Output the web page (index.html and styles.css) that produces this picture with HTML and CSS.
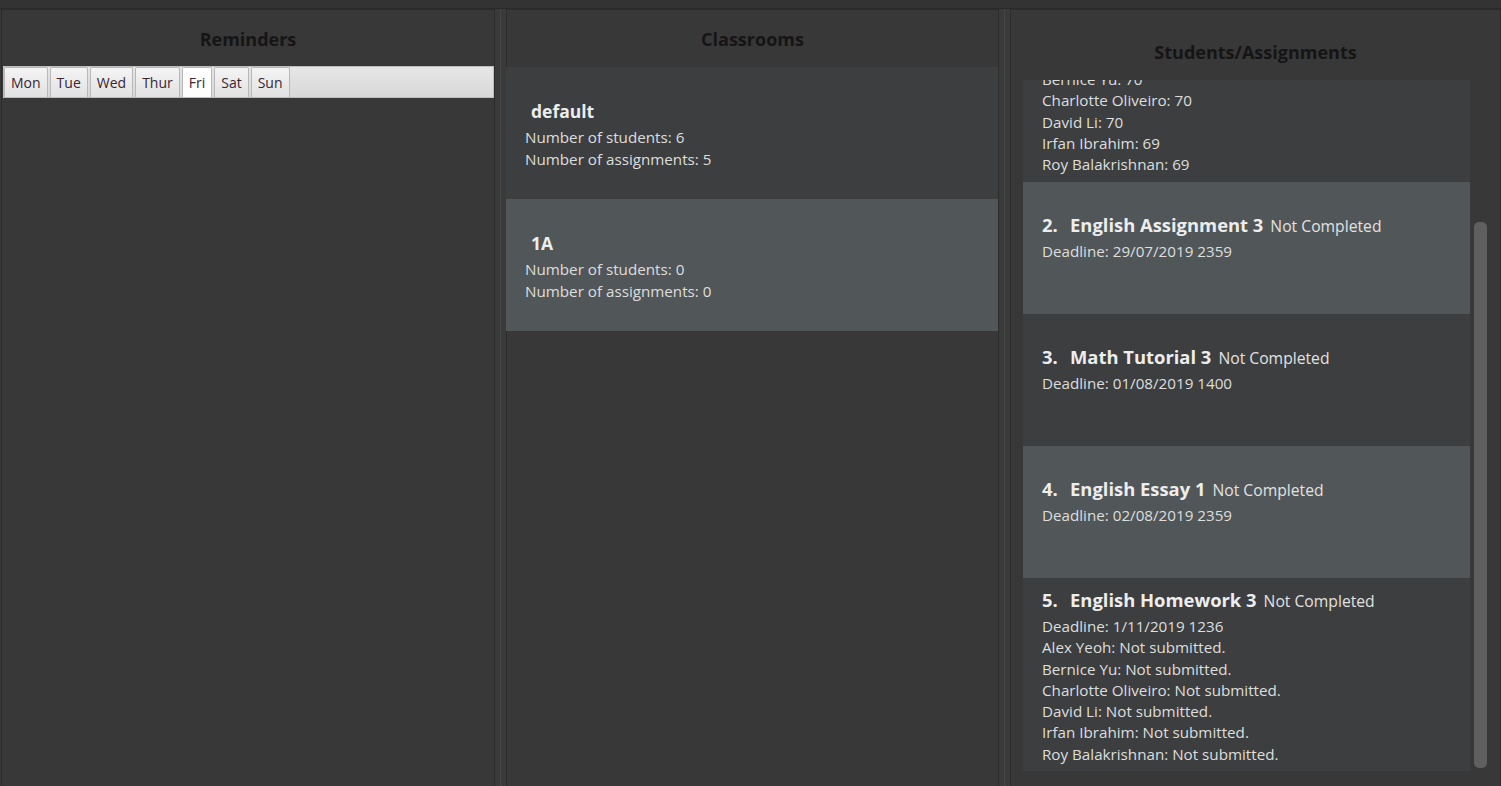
FILE: index.html
```html
<!DOCTYPE html>
<html>
<head>
<meta charset="utf-8">
<link rel="stylesheet" href="styles.css">
</head>
<body>
<div class="topbar"></div>
<div class="panes">
  <section class="pane pane-left">
    <h2 class="pane-title">Reminders</h2>
    <div class="tabbar">
      <div class="tab">Mon</div>
      <div class="tab">Tue</div>
      <div class="tab">Wed</div>
      <div class="tab">Thur</div>
      <div class="tab selected">Fri</div>
      <div class="tab">Sat</div>
      <div class="tab">Sun</div>
    </div>
  </section>
  <div class="divider"></div>
  <section class="pane pane-mid">
    <h2 class="pane-title">Classrooms</h2>
    <div class="class-list">
      <div class="class-cell even">
        <div class="class-name">default</div>
        <div class="line">Number of students: 6</div>
        <div class="line">Number of assignments: 5</div>
      </div>
      <div class="class-cell odd">
        <div class="class-name">1A</div>
        <div class="line">Number of students: 0</div>
        <div class="line">Number of assignments: 0</div>
      </div>
    </div>
  </section>
  <div class="divider"></div>
  <section class="pane pane-right">
    <h2 class="pane-title title-right">Students/Assignments</h2>
    <div class="assign-area">
      <div class="assign-list">
        <div class="assign-cell even first">
          <div class="scrolled">
            <div class="aline">Bernice Yu: 70</div>
            <div class="aline">Charlotte Oliveiro: 70</div>
            <div class="aline">David Li: 70</div>
            <div class="aline">Irfan Ibrahim: 69</div>
            <div class="aline">Roy Balakrishnan: 69</div>
          </div>
        </div>
        <div class="assign-cell odd short">
          <div class="a-title"><span class="a-num">2.</span><span class="a-name">English Assignment 3</span><span class="a-status">Not Completed</span></div>
          <div class="aline deadline">Deadline: 29/07/2019 2359</div>
        </div>
        <div class="assign-cell even short">
          <div class="a-title"><span class="a-num">3.</span><span class="a-name">Math Tutorial 3</span><span class="a-status">Not Completed</span></div>
          <div class="aline deadline">Deadline: 01/08/2019 1400</div>
        </div>
        <div class="assign-cell odd short">
          <div class="a-title"><span class="a-num">4.</span><span class="a-name">English Essay 1</span><span class="a-status">Not Completed</span></div>
          <div class="aline deadline">Deadline: 02/08/2019 2359</div>
        </div>
        <div class="assign-cell even long">
          <div class="a-title"><span class="a-num">5.</span><span class="a-name">English Homework 3</span><span class="a-status">Not Completed</span></div>
          <div class="aline deadline">Deadline: 1/11/2019 1236</div>
          <div class="aline">Alex Yeoh: Not submitted.</div>
          <div class="aline">Bernice Yu: Not submitted.</div>
          <div class="aline">Charlotte Oliveiro: Not submitted.</div>
          <div class="aline">David Li: Not submitted.</div>
          <div class="aline">Irfan Ibrahim: Not submitted.</div>
          <div class="aline">Roy Balakrishnan: Not submitted.</div>
        </div>
      </div>
      <div class="scrollbar"><div class="thumb"></div></div>
    </div>
  </section>
</div>
</body>
</html>
```
FILE: styles.css
```css
* { box-sizing: border-box; }
html, body {
  margin: 0;
  padding: 0;
  width: 1501px;
  height: 786px;
  overflow: hidden;
  background: #383838;
  font-family: "Open Sans", "Noto Sans", sans-serif;
}
.topbar {
  height: 9px;
  background: #333333;
  border-bottom: 1px solid #2a2a2a;
}
.panes {
  display: flex;
  height: 777px;
  padding-left: 1px;
}
.pane {
  background: #383838;
  border: 1px solid #2c2c2c;
  border-bottom: none;
  display: flex;
  flex-direction: column;
}
.pane-left { width: 494px; }
.pane-mid { width: 493px; }
.pane-right { width: 491px; }
.divider {
  width: 11px;
  background: #3a3a3a;
  display: flex;
  justify-content: center;
}
.divider::before {
  content: "";
  width: 1px;
  background: #464646;
}
.pane-title {
  margin: 0;
  height: 56px;
  padding-top: 16px;
  text-align: center;
  font-size: 18px;
  font-weight: 700;
  color: #151515;
  line-height: 26px;
}
.title-right {
  height: 70px;
  padding-top: 29px;
}
.tabbar {
  margin: 0 0 0 1px;
  height: 32px;
  background: linear-gradient(#e6e6e6, #d8d8d8);
  border: 1px solid #bdbdbd;
  display: flex;
  align-items: flex-end;
  gap: 2px;
  padding-left: 0;
}
.tab {
  height: 30px;
  padding: 0 6px;
  background: linear-gradient(#f4f4f4, #e2e2e2);
  border: 1px solid #b8b8b8;
  border-bottom: none;
  border-radius: 2px 2px 0 0;
  font-size: 14px;
  line-height: 29px;
  color: #3b2433;
}
.tab.selected {
  background: #ffffff;
}
.class-list {
  margin-top: 1px;
  margin-left: -1px;
  display: flex;
  flex-direction: column;
}
.class-cell {
  height: 132px;
  padding: 2px 0 0 19px;
  display: flex;
  flex-direction: column;
  justify-content: center;
  color: #dedede;
}
.even { background: #3c3e3f; }
.odd { background: #515658; }
.class-name {
  font-size: 17.5px;
  font-weight: 700;
  color: #ededed;
  padding-left: 6px;
  line-height: 24px;
  margin-bottom: 3px;
}
.line {
  font-size: 15.2px;
  line-height: 22px;
}
.assign-area {
  display: flex;
  flex: 1;
  padding-left: 12px;
  min-height: 0;
}
.assign-list {
  width: 447px;
  height: 691px;
  overflow: hidden;
  display: flex;
  flex-direction: column;
}
.assign-cell {
  padding-left: 19px;
  color: #dedede;
  flex-shrink: 0;
}
.assign-cell.first {
  height: 102px;
  overflow: hidden;
}
.scrolled { margin-top: -11px; }
.assign-cell.short {
  height: 132px;
  padding-top: 30px;
}
.assign-cell.long {
  height: 195px;
  padding-top: 9px;
}
.a-title {
  display: flex;
  align-items: baseline;
  line-height: 26px;
}
.a-num {
  font-size: 18.4px;
  font-weight: 700;
  color: #ededed;
  width: 28px;
}
.a-name {
  font-size: 18.4px;
  font-weight: 700;
  color: #ededed;
  margin-right: 7px;
}
.a-status {
  font-size: 15.7px;
  color: #e2e2e2;
}
.aline {
  font-size: 15.2px;
  line-height: 21.3px;
}
.deadline { margin-top: 2px; }
.scrollbar {
  width: 13px;
  margin-left: 4px;
  padding-top: 142px;
}
.thumb {
  height: 546px;
  background: #5f5f5f;
  border-radius: 5px;
}
```
